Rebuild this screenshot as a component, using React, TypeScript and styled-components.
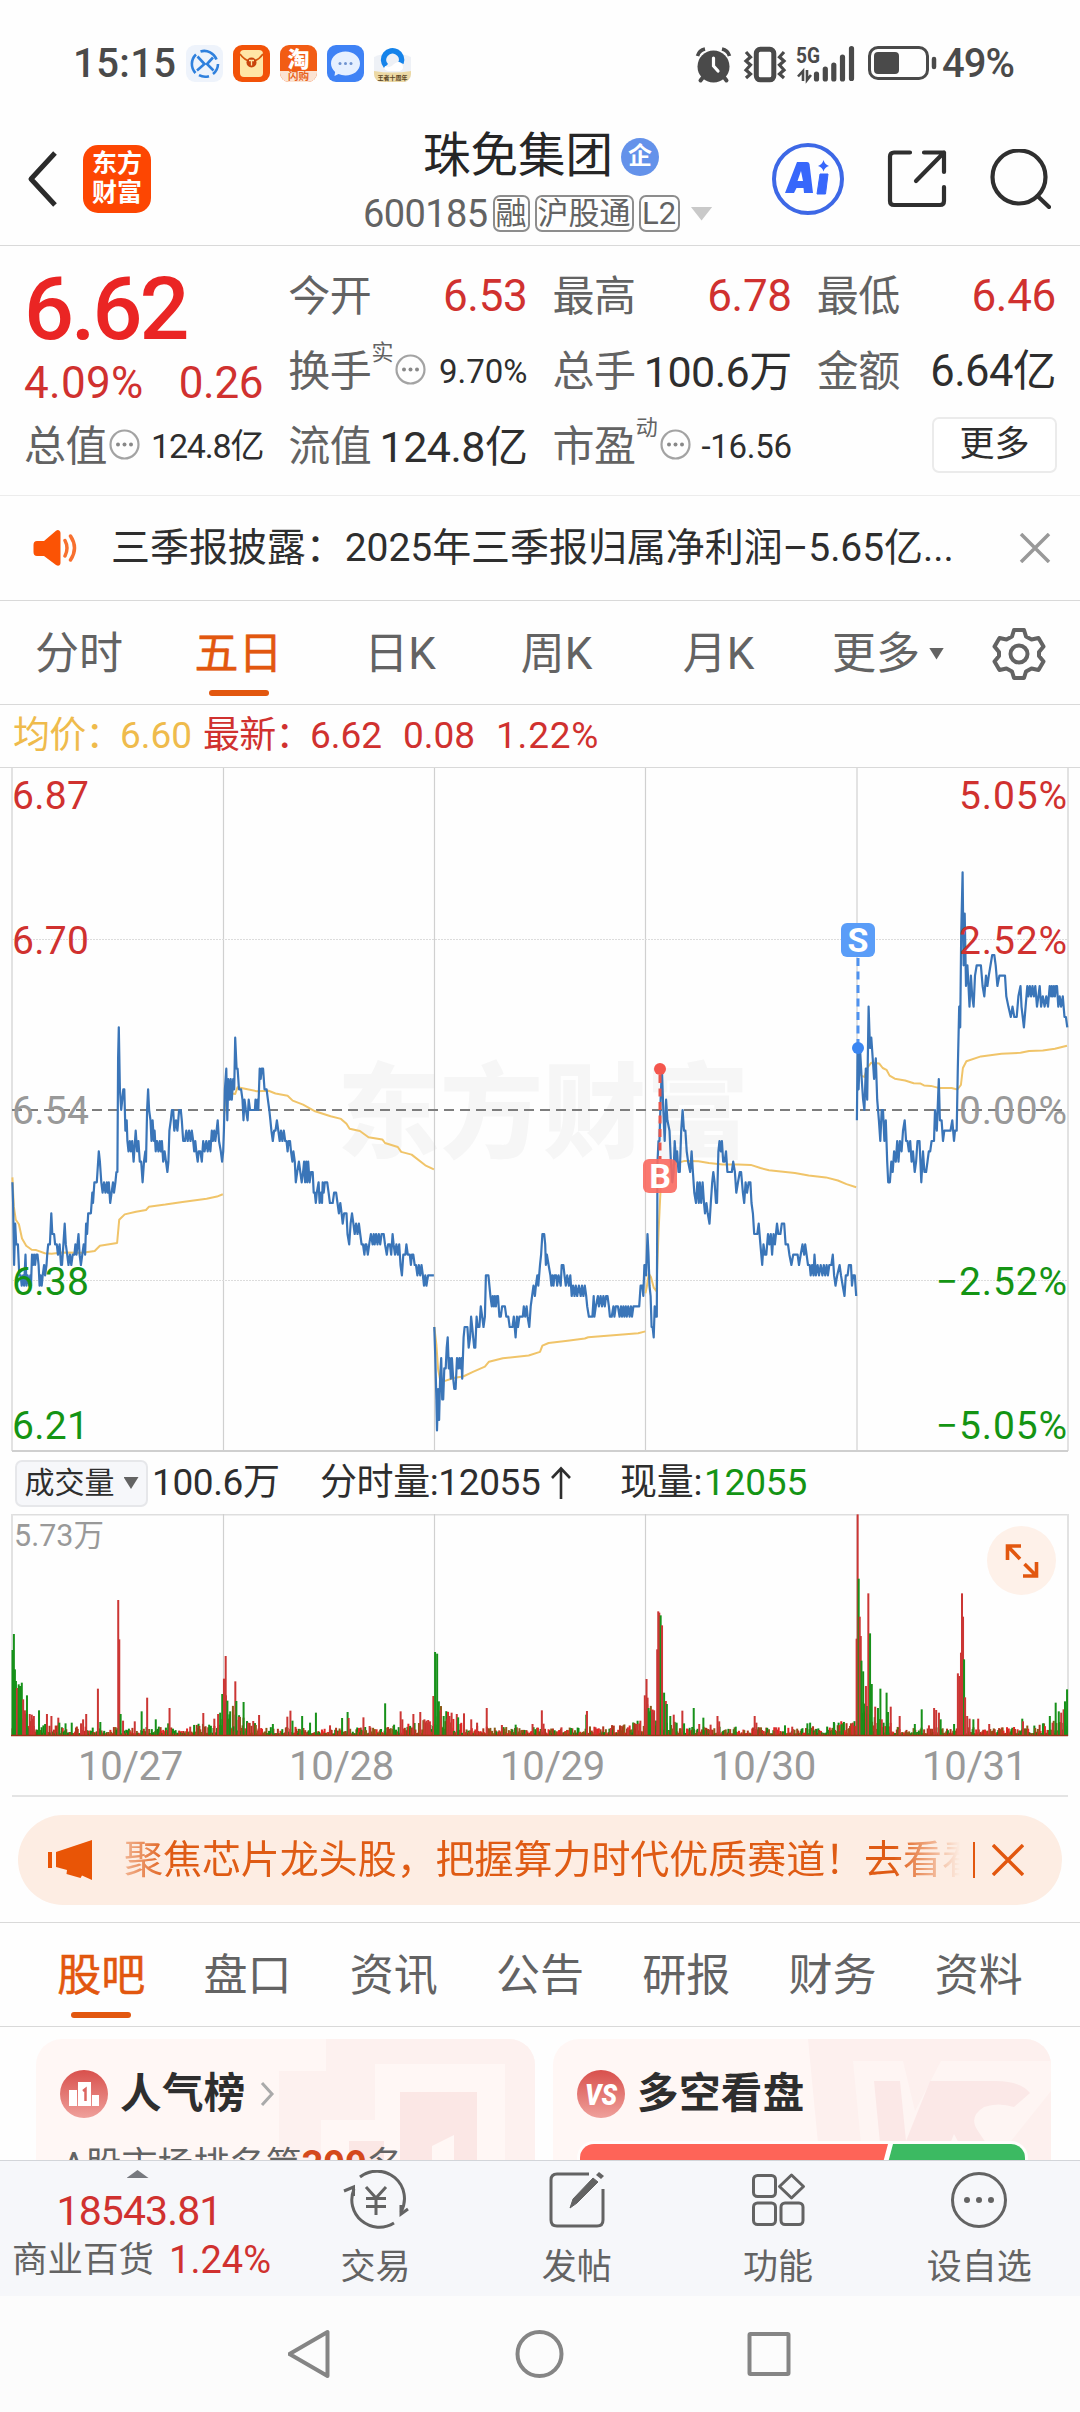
import React from 'react';
import styled, { createGlobalStyle } from 'styled-components';

const RED = '#d0312f';
const GREEN = '#149414';
const ORANGE = '#e2570f';
const INK = '#2e2e2e';
const GRAY = '#636363';
const LINE = '#d9d9d9';

const Global = createGlobalStyle`
  body { margin: 0; background: #fefefe; }
  * { box-sizing: border-box; }
  #root { font-family: Roboto, "Noto Sans CJK SC", sans-serif; color: ${INK}; }
  svg { display: block; flex: none; }
`;

const Page = styled.div`
  width: 1080px;
  height: 2412px;
  overflow: hidden;
  display: flex;
  flex-direction: column;
  background: #fefefe;
  white-space: nowrap;
`;

const Txt = styled.span<{ s: number; c?: string; w?: number; ls?: number }>`
  font-size: ${p => p.s}px;
  line-height: ${p => Math.round(p.s * 1.2)}px;
  color: ${p => p.c ?? 'inherit'};
  font-weight: ${p => p.w ?? 400};
  letter-spacing: ${p => p.ls ?? 0}px;
`;

/* ---------- status bar ---------- */
const StatusBar = styled.div`
  height: 113px;
  padding: 14px 66px 0 73px;
  display: flex;
  align-items: center;
  color: #4a4a4a;
`;
const AppIcons = styled.div`
  display: flex;
  gap: 10px;
  margin-left: 10px;
  flex: 1;
`;
const StatusRight = styled.div`
  display: flex;
  align-items: center;
`;
const Spacer = styled.div<{ w: number }>`
  width: ${p => p.w}px;
  flex: none;
`;

const StatusIcons = () => (
  <AppIcons>
    <svg width="37" height="37" viewBox="0 0 37 37">
      <rect width="37" height="37" rx="9" fill="#eef3fb" />
      <g fill="none" stroke="#2f80dd" strokeWidth="2.6">
        <path d="M14.500 6.500a13 13 0 0 1 16 8M32 19a13 13 0 0 1-5 10M23 31.200a13 13 0 0 1-10-1M9.500 28a13 13 0 0 1 .5-18.500" />
        <path d="M11.500 11.500l7 7.500-7.500 6.500M27 12.500l-6 6.500 6.500 6.500" />
      </g>
    </svg>
    <svg width="37" height="37" viewBox="0 0 37 37">
      <rect width="37" height="37" rx="9" fill="#f25208" />
      <rect x="7" y="5" width="23" height="27" rx="4" fill="#ffe6a6" />
      <path d="M7 9q4 6 11.500 8Q26 15 30 9" fill="none" stroke="#d5570d" strokeWidth="1.600" />
      <circle cx="18.500" cy="17.500" r="5" fill="#c8440c" />
      <path d="M16 15.500h5M18.500 15.500v5" stroke="#ffe6a6" strokeWidth="1.300" />
    </svg>
    <svg width="37" height="37" viewBox="0 0 37 37">
      <rect width="37" height="37" rx="9" fill="#f25c14" />
      <path d="M0 26h37v2a9 9 0 0 1-9 9H9a9 9 0 0 1-9-9z" fill="#fbe3d3" />
      <text x="18.500" y="21.500" fontSize="22" fontWeight="900" fill="#fff" textAnchor="middle">淘</text>
      <text x="18.500" y="35" fontSize="10.500" fontWeight="700" fill="#e8631c" textAnchor="middle">闪购</text>
    </svg>
    <svg width="37" height="37" viewBox="0 0 37 37">
      <rect width="37" height="37" rx="9" fill="#3f82f5" />
      <path d="M18.500 6.500c8 0 14.500 5 14.500 12s-6.500 12-14.500 12c-2.500 0-5-.5-7-1.400L7.500 31l.6-4C5.500 24.500 4 21.800 4 18.500c0-7 6.500-12 14.500-12z" fill="#e6f0ff" />
      <g fill="#6f93d0"><circle cx="13" cy="18.500" r="1.500" /><circle cx="18.500" cy="18.500" r="1.500" /><circle cx="24" cy="18.500" r="1.500" /></g>
    </svg>
    <svg width="37" height="37" viewBox="0 0 37 37">
      <path d="M0 12q18-8 37 0v17a8 8 0 0 1-8 8H8a8 8 0 0 1-8-8z" fill="#eef1f6" />
      <path d="M12 21a9 9 0 1 1 15-3" fill="none" stroke="#1583ea" strokeWidth="5.500" />
      <path d="M11 21q5 3 9-2 5-4 8 0 3 5-2 7H14q-5-1-3-5z" fill="#fff" />
      <path d="M0 26q18 3 37 0v3a8 8 0 0 1-8 8H8a8 8 0 0 1-8-8z" fill="#ecd9a5" />
      <text x="18.500" y="34.500" fontSize="6" fontWeight="700" fill="#5a4526" textAnchor="middle">王者十周年</text>
    </svg>
  </AppIcons>
);

const StatusGlyphs = () => (
  <svg width="245" height="40" viewBox="692 43 245 40" fill="none" stroke="#4a4a4a">
    <circle cx="712.500" cy="65.500" r="16" fill="#4a4a4a" stroke="none" />
    <path d="M696.500 55a10 10 0 0 1 7.500-7M728.500 55a10 10 0 0 0-7.500-7" strokeWidth="3.600" />
    <path d="M703 75l-3.500 4.500M722 75l3.500 4.500" strokeWidth="4" strokeLinecap="round" />
    <path d="M712.500 57v8l4.500 5" stroke="#fff" strokeWidth="3.200" strokeLinecap="round" />
    <rect x="755.300" y="48.300" width="17.500" height="30.500" rx="4" strokeWidth="5" />
    <path d="M745 51l4.500 5-4.500 4 4.500 4-4.500 5 4.500 4-4.500 4M783 51l-4.500 5 4.500 4-4.500 4 4.500 5-4.500 4 4.500 4" strokeWidth="3.200" />
    <text x="795" y="62" fontSize="22" fontWeight="700" fill="#4a4a4a" stroke="none" textLength="24" lengthAdjust="spacingAndGlyphs">5G</text>
    <path d="M802 80V70l-5 5.500M806 69v10l4-5" strokeWidth="2.600" />
    <path d="M815.500 73v5M824.300 68v10M832.800 64v14M841.500 56v22M850.500 47.500v30" strokeWidth="5.200" strokeLinecap="round" />
    <rect x="868.500" y="46.500" width="58" height="31" rx="8.500" strokeWidth="3" />
    <rect x="873" y="51" width="25" height="22" rx="4" fill="#4a4a4a" stroke="none" />
    <path d="M933 58v8" strokeWidth="4.500" strokeLinecap="round" />
  </svg>
);

/* ---------- header ---------- */
const Header = styled.header`
  height: 133px;
  border-bottom: 1px solid ${LINE};
  padding: 0 29px 0 27px;
  display: grid;
  grid-template-columns: 291px 1fr 280px;
  align-items: center;
`;
const HeaderSide = styled.div<{ right?: boolean }>`
  display: flex;
  align-items: center;
  gap: ${p => (p.right ? 43 : 25)}px;
  justify-content: ${p => (p.right ? 'flex-end' : 'flex-start')};
`;
const Logo = styled.div`
  width: 68px;
  height: 68px;
  border-radius: 15px;
  background: #fd4602;
  color: #fff;
  font-size: 25px;
  line-height: 29px;
  font-weight: 700;
  text-align: center;
  padding-top: 4px;
  white-space: normal;
`;
const TitleCol = styled.div`
  display: flex;
  flex-direction: column;
  padding-top: 8px;
`;
const TitleRow = styled.div`
  display: flex;
  align-items: center;
  height: 61px;
  padding-left: 105px;
  gap: 8px;
`;
const Corp = styled.span`
  width: 38px;
  height: 38px;
  border-radius: 50%;
  background: #6492ea;
  color: #fff;
  font-size: 24px;
  line-height: 36px;
  font-weight: 700;
  text-align: center;
`;
const CodeRow = styled.div`
  display: flex;
  align-items: center;
  height: 53px;
  padding-left: 45px;
  gap: 5px;
`;
const Tag = styled.span<{ w?: number }>`
  border: 2px solid #8d8d8d;
  border-radius: 7px;
  height: 37px;
  width: ${p => (p.w ? `${p.w}px` : 'auto')};
  text-align: center;
  padding: 0 1px;
  font-size: 31px;
  line-height: 33px;
  color: ${GRAY};
`;
const Down = styled.i<{ w: number; h: number; c: string; up?: boolean }>`
  width: ${p => p.w}px;
  height: ${p => p.h}px;
  background: ${p => p.c};
  clip-path: ${p => (p.up ? 'polygon(50% 0, 100% 100%, 0 100%)' : 'polygon(0 0, 100% 0, 50% 100%)')};
`;

/* ---------- quote panel ---------- */
const Quote = styled.section`
  height: 250px;
  border-bottom: 1px solid #ececec;
  padding: 13px 24px 0;
  display: grid;
  grid-template-columns: repeat(4, 1fr);
  column-gap: 25px;
  align-content: start;
`;
const QuoteCol = styled.div`
  display: flex;
  flex-direction: column;
`;
const Cell = styled.div<{ h?: number }>`
  height: ${p => p.h ?? 75}px;
  display: flex;
  align-items: center;
  justify-content: space-between;
`;
const LabelBox = styled.span`
  display: flex;
  align-items: center;
  color: ${GRAY};
`;
const Sup = styled.sup`
  font-size: 22px;
  line-height: 24px;
  align-self: flex-start;
  margin-top: -6px;
`;
const HintBox = styled.span`
  margin: 0 0 4px 2px;
`;
const MoreButton = styled.button`
  width: 125px;
  height: 56px;
  margin-left: auto;
  margin-right: -1px;
  margin-bottom: 3px;
  padding: 0;
  border: 2px solid #ebebeb;
  border-radius: 7px;
  background: #fff;
  font: 35px/50px Roboto, "Noto Sans CJK SC", sans-serif;
  color: ${INK};
`;
const Hint = () => (
  <HintBox>
    <svg width="31" height="31" viewBox="0 0 31 31" fill="none" stroke="#a3a3a3" strokeWidth="2.200">
      <circle cx="15.500" cy="15.500" r="14" />
      <g fill="#888" stroke="none"><circle cx="9" cy="15.500" r="2" /><circle cx="15.500" cy="15.500" r="2" /><circle cx="22" cy="15.500" r="2" /></g>
    </svg>
  </HintBox>
);

type StatProps = { label: string; value: string; sup?: string; hint?: boolean; c?: string; s?: number; ls?: number };
const Stat = ({ label, value, sup, hint, c, s = 44, ls = 0 }: StatProps) => (
  <Cell>
    <LabelBox>
      <Txt s={42} ls={-0.4}>{label}</Txt>
      {sup && <Sup>{sup}</Sup>}
      {hint && <Hint />}
    </LabelBox>
    <Txt s={s} c={c} ls={ls}>{value}</Txt>
  </Cell>
);

/* ---------- news ---------- */
const News = styled.section`
  height: 105px;
  border-bottom: 1px solid ${LINE};
  padding: 0 29px 0 32px;
  display: flex;
  align-items: center;
`;
const NewsText = styled.div`
  flex: 1;
  padding-left: 32px;
  font-size: 39px;
  line-height: 48px;
  letter-spacing: -0.05px;
`;

/* ---------- tabs ---------- */
const PeriodTabs = styled.nav`
  height: 104px;
  border-bottom: 1px solid ${LINE};
  display: grid;
  grid-template-columns: 158px 161px 162px 151px 173px 166px 95px;
`;
const SectionTabs = styled.nav`
  height: 104px;
  border-bottom: 1px solid ${LINE};
  padding: 0 28px;
  display: grid;
  grid-template-columns: repeat(7, 1fr);
`;
const Tab = styled.div<{ on?: boolean }>`
  display: flex;
  align-items: center;
  justify-content: center;
  gap: 9px;
  position: relative;
  padding-top: 2px;
  font-size: 44px;
  line-height: 52px;
  font-weight: 400;
  -webkit-text-stroke: ${p => (p.on ? 0.5 : 0)}px currentColor;
  color: ${p => (p.on ? ORANGE : GRAY)};
  &::after {
    content: '';
    display: ${p => (p.on ? 'block' : 'none')};
    position: absolute;
    bottom: 8px;
    left: calc(50% - 30px);
    width: 60px;
    height: 6px;
    border-radius: 3px;
    background: ${ORANGE};
  }
`;

const InfoLine = styled.div`
  height: 63px;
  border-bottom: 1px solid ${LINE};
  padding-left: 13px;
  display: flex;
  align-items: center;
  font-size: 37px;
  line-height: 44px;
  color: ${RED};
`;
const Piece = styled.span<{ w: number; c?: string; ls?: number }>`
  width: ${p => p.w}px;
  color: ${p => p.c ?? 'inherit'};
  letter-spacing: ${p => p.ls ?? 0}px;
`;

/* ---------- price chart ---------- */
const X_UNIT = 0.3444;
const TICK = 10.335;
const BASE_Y = 1110;
const HALF = 1568;

/* [time, ticks below the 6.54 base line] for each run of trading days */
const priceDays: { shift: number; data: string }[] = [
  { shift: 0, data: '36,7 38,9 41,15 44,11 47,13 52,13 56,16 60,16 63,17 67,16 70,17 74,14 77,17 80,16 85,17 88,16 90,17 93,14 96,15 99,14 102,15 105,14 109,14 112,15 115,17 118,16 121,17 124,16 128,15 131,16 135,15 137,14 140,13 145,13 149,10 152,12 157,12 160,13 165,13 168,14 173,13 177,15 180,15 184,13 188,11 191,13 195,14 199,15 203,14 207,15 211,14 216,14 219,13 222,14 228,12 231,14 235,15 239,14 243,13 247,14 250,11 253,12 256,10 264,10 268,8 270,9 274,7 281,7 287,4 290,5 294,7 298,8 302,7 306,8 310,7 313,8 316,7 320,9 324,8 328,7 331,8 335,7 338,6 341,6 343,-5 345,-8 348,-2 352,0 355,-1 358,-2 361,-2 364,2 368,1 370,3 373,4 377,3 380,4 384,3 388,5 390,4 394,2 398,4 402,3 406,5 410,5 414,7 418,5 422,4 424,5 427,0 430,-2 433,0 437,1 440,3 443,1 447,3 449,2 452,4 456,3 460,4 464,3 467,4 470,3 474,5 478,4 482,5 486,6 489,5 492,2 496,1 499,0 503,0 506,2 511,1 515,2 520,0 525,0 528,1 532,3 537,3 541,2 545,3 549,2 553,3 557,2 561,3 564,4 567,3 570,4 574,5 577,4 582,4 586,5 590,3 594,4 599,3 603,4 607,3 611,4 615,2 618,3 622,2 625,3 629,2 632,1 636,3 641,4 645,5 648,4 650,2 653,-2 657,-4 660,1 663,-3 667,-1 670,-3 673,-1 677,-3 680,-2 683,-7 687,-4 690,-4 694,-2 700,-2 704,-1 707,1 710,-1 714,0 719,1 722,-1 726,0 740,0 742,-1 745,0 748,-1 750,0 754,-4 757,-3 760,-4 764,-4 768,-2 774,-2 778,-1 782,0 785,1 788,2 792,3 796,2 800,2 804,1 808,2 812,3 816,2 820,3 824,2 828,3 832,3 835,4 838,3 842,3 845,4 849,5 852,4 856,5 859,7 863,6 868,5 872,6 876,7 880,6 883,5 886,7 889,5 892,7 895,5 899,7 903,6 908,6 911,8 914,8 917,9 920,8 925,7 928,9 932,8 935,9 937,7 940,8 943,7 950,7 954,8 958,9 966,9 970,8 976,8 980,9 984,10 988,9 992,10 995,11 999,10 1006,10 1009,12 1014,13 1018,11 1022,10 1026,11 1030,12 1034,11 1038,12 1042,11 1046,12 1050,13 1054,13 1058,14 1061,13 1064,13 1068,14 1072,13 1077,12 1082,13 1085,12 1088,13 1092,12 1096,13 1100,12 1104,13 1108,12 1114,12 1118,13 1123,14 1127,13 1132,13 1136,14 1140,12 1143,13 1147,14 1151,13 1155,14 1159,13 1163,15 1167,16 1171,14 1177,14 1180,13 1184,14 1190,14 1193,15 1196,14 1200,14 1204,15 1208,15 1212,16 1216,15 1220,16 1224,15 1228,16 1231,17 1235,16 1238,17 1243,16 1260,16' },
  { shift: 0, data: '1261,21 1264,24 1267,28 1269,31 1272,27 1275,30 1278,26 1281,24 1284,28 1287,28 1290,25 1294,25 1297,23 1300,22 1303,25 1306,24 1309,26 1312,24 1316,26 1319,27 1323,27 1327,24 1331,25 1334,24 1337,25 1340,24 1342,26 1346,22 1349,21 1357,21 1361,23 1365,22 1368,20 1371,21 1374,22 1377,23 1380,23 1384,20 1387,21 1392,21 1396,19 1400,20 1404,21 1408,20 1411,16 1418,16 1421,17 1424,18 1428,19 1431,18 1434,19 1437,18 1440,19 1443,18 1446,18 1450,20 1454,20 1458,19 1466,19 1470,20 1476,20 1480,21 1488,21 1492,20 1497,22 1501,20 1504,21 1508,20 1518,20 1521,19 1525,20 1529,19 1532,20 1537,21 1541,19 1545,18 1549,17 1553,18 1556,17 1560,16 1563,17 1568,15 1571,14 1575,12 1580,12 1583,13 1585,15 1588,14 1593,15 1598,16 1601,17 1604,16 1607,17 1610,16 1615,16 1618,17 1622,16 1628,17 1631,15 1636,15 1639,16 1643,17 1647,16 1652,17 1656,16 1660,18 1664,17 1668,18 1672,17 1676,18 1681,17 1686,18 1690,17 1694,18 1698,17 1702,18 1705,19 1710,20 1720,20 1724,18 1726,20 1730,19 1736,18 1739,19 1744,18 1748,19 1752,18 1756,19 1760,18 1764,18 1768,19 1771,20 1776,20 1781,19 1784,20 1788,19 1794,19 1799,20 1803,19 1806,20 1810,19 1813,20 1817,19 1820,20 1824,19 1828,20 1832,19 1835,20 1839,19 1856,19 1860,17 1865,17 1868,18 1871,15 1874,15 1876,16 1880,12 1883,14 1886,17 1889,18 1892,21 1895,21 1898,22 1901,19 1904,20 1907,20 1909,5 1912,3 1915,3 1918,-1 1922,-4 1926,0 1930,3 1934,-1 1938,1 1944,2 1948,5 1952,7 1956,6 1959,3 1963,5 1966,4 1970,6 1974,6 1978,2 1982,0 1986,2 1990,2 1994,4 1998,5 2004,6 2008,4 2012,6 2016,8 2021,9 2025,7 2029,9 2032,7 2036,9 2040,7 2044,9 2047,10 2051,9 2055,10 2060,11 2064,9 2068,7 2071,6 2075,7 2079,9 2082,9 2086,4 2089,3 2093,4 2096,3 2100,5 2104,5 2108,4 2112,6 2125,6 2129,5 2134,6 2138,8 2143,7 2148,6 2152,6 2157,8 2161,9 2165,7 2169,8 2174,7 2179,7 2182,9 2186,10 2190,12 2199,12 2203,11 2208,13 2213,15 2217,13 2221,14 2225,14 2230,12 2234,13 2238,12 2242,14 2246,12 2250,13 2256,11 2260,12 2266,12 2270,11 2277,11 2281,13 2288,13 2292,14 2298,15 2303,14 2316,14 2320,15 2325,14 2330,13 2335,14 2338,13 2342,14 2346,15 2351,15 2354,16 2358,15 2362,16 2365,14 2369,16 2374,15 2378,16 2383,15 2388,16 2392,15 2396,16 2400,15 2404,16 2408,15 2414,15 2418,14 2422,16 2426,17 2431,16 2438,15 2442,16 2447,17 2452,18 2456,16 2461,16 2465,15 2471,15 2474,17 2477,16 2482,16 2486,18' },
  { shift: HALF, data: '920,1 922,-6 925,-2 929,-6 934,-3 938,-1 942,0 946,-4 950,-1 954,-10 958,-6 962,-7 966,-5 970,-3 975,-5 979,-1 984,1 988,3 992,0 996,0 1000,3 1004,1 1008,5 1011,7 1016,7 1020,5 1024,6 1028,4 1033,5 1037,3 1041,5 1045,3 1050,4 1054,2 1059,1 1063,3 1067,3 1071,4 1075,3 1079,5 1083,4 1088,6 1092,5 1096,3 1102,3 1107,7 1112,4 1116,6 1121,6 1125,5 1129,4 1133,4 1137,3 1144,3 1147,0 1152,2 1158,-3 1161,1 1166,1 1170,3 1174,2 1192,2 1197,1 1202,3 1205,2 1210,2 1213,-4 1217,-10 1220,-8 1223,-17 1227,-23 1230,-14 1233,-19 1237,-12 1241,-14 1244,-12 1247,-10 1251,-13 1255,-11 1259,-10 1263,-13 1268,-14 1280,-14 1285,-12 1290,-11 1295,-13 1299,-12 1303,-13 1308,-14 1313,-15 1319,-15 1323,-14 1328,-12 1334,-13 1350,-13 1354,-11 1360,-10 1367,-9 1372,-10 1377,-9 1384,-9 1389,-11 1395,-12 1398,-10 1405,-8 1410,-10 1415,-12 1418,-11 1422,-12 1426,-11 1430,-12 1434,-11 1438,-12 1443,-10 1447,-11 1451,-12 1455,-10 1460,-11 1465,-10 1470,-11 1475,-10 1480,-12 1484,-11 1486,-12 1489,-11 1492,-12 1495,-11 1498,-12 1501,-12 1505,-10 1509,-11 1513,-10 1518,-11 1523,-9 1527,-9 1531,-8' },
];

const averageDays: { shift: number; data: string }[] = [
  { shift: 0, data: '36,935 40,1000 46,1030 55,1040 64,1072 76,1088 92,1097 105,1098 130,1105 150,1106 180,1103 240,1104 275,1100 290,1088 340,1082 346,1030 362,1018 395,1012 424,1008 432,1001 480,996 530,990 600,983 630,978 647,973' },
  { shift: 0, data: '650,800 657,745 683,748 690,733 715,737 745,742 780,741 800,747 835,752 850,763 880,772 915,787 960,798 990,804 1006,815 1015,826 1045,831 1070,845 1110,850 1118,858 1155,867 1165,878 1195,884 1235,908 1260,917' },
  { shift: 0, data: '1261,1270 1267,1310 1272,1365 1278,1388 1292,1391 1320,1384 1345,1381 1375,1370 1408,1359 1420,1348 1460,1340 1535,1334 1568,1326 1575,1312 1593,1306 1648,1301 1698,1296 1708,1293 1808,1287 1853,1284 1874,1280' },
  { shift: HALF, data: '306,1195 310,1180 316,1150 322,1158 330,1182 338,1190 344,1060 350,960 356,930 375,912 400,902 420,898 460,899 490,903 530,906 575,906 612,907 640,914 665,919 740,925 780,931 830,935 865,942 890,950 918,957' },
  { shift: HALF, data: '922,740 925,700 935,708 942,710 950,690 962,678 985,680 995,690 1006,694 1015,707 1030,714 1060,718 1085,724 1105,725 1115,729 1135,730 1160,735 1195,735 1212,738 1222,728 1228,690 1238,675 1280,664 1340,658 1395,656 1420,652 1460,651 1495,647 1530,640' },
];

const toPoints = (day: { shift: number; data: string }, y: (v: number) => number) =>
  day.data
    .split(' ')
    .map(pair => {
      const [x, v] = pair.split(',').map(Number);
      return `${((x + day.shift) * X_UNIT).toFixed(1)},${y(v).toFixed(1)}`;
    })
    .join(' ');

const GRID_X = [12, 223.5, 434.5, 645.5, 857, 1068];

const leftScale: [string, number, string][] = [
  ['6.87', 809, RED], ['6.70', 954, RED], ['6.54', 1124, '#999'], ['6.38', 1295, GREEN], ['6.21', 1439, GREEN],
];
const rightScale: [string, number, string][] = [
  ['5.05%', 809, RED], ['2.52%', 954, RED], ['0.00%', 1124, '#999'], ['−2.52%', 1295, GREEN], ['−5.05%', 1439, GREEN],
];

const PriceChart = () => (
  <svg width="1080" height="684" viewBox="0 768 1080 684">
    <text x="337" y="1150" fontSize="103" fontWeight="900" fill="#f6f6f6">东方财富</text>
    {GRID_X.map((x, i) => (
      <path key={x} d={`M${x} 768V1451`} stroke={i % 5 ? '#d0d0d0' : '#e2e2e2'} strokeWidth={i % 5 ? 1.2 : 2} />
    ))}
    <path d="M12 939.500H1068M12 1280.500H1068" stroke="#dcdcdc" strokeDasharray="2 1" />
    <path d="M12 1451H1068" stroke="#cfcfcf" strokeWidth="2" />
    <path d="M12 1110H1068" stroke="#7d7d7d" strokeWidth="1.800" strokeDasharray="10 6" />
    <g fill="none" strokeLinejoin="round">
      {averageDays.map((d, i) => (
        <polyline key={i} points={toPoints(d, v => 760 + v * 0.4464)} stroke="#f0c469" strokeWidth="2" />
      ))}
      {priceDays.map((d, i) => (
        <polyline key={i} points={toPoints(d, v => BASE_Y + v * TICK)} stroke="#3a75b8" strokeWidth="2.200" />
      ))}
    </g>
    <path d="M858 958v86" stroke="#4e92f0" strokeWidth="3" strokeDasharray="8 5.500" />
    <circle cx="858" cy="1048" r="6" fill="#3a86f2" />
    <rect x="841" y="923" width="34" height="34" rx="6" fill="#5a9df8" />
    <text x="858" y="952" fontSize="34" fontWeight="700" fill="#fff" textAnchor="middle">S</text>
    <path d="M660 1075v84" stroke="#e8544a" strokeWidth="3" strokeDasharray="8 5.500" />
    <circle cx="660" cy="1069" r="6" fill="#f4564d" />
    <rect x="643" y="1159" width="34" height="34" rx="6" fill="#f9695f" fillOpacity="0.900" />
    <text x="660" y="1188" fontSize="34" fontWeight="700" fill="#fff" textAnchor="middle">B</text>
    {leftScale.map(([t, y, c]) => (
      <text key={t} x="12" y={y} fontSize="39" fill={c} letterSpacing="0.300">{t}</text>
    ))}
    {rightScale.map(([t, y, c]) => (
      <text key={t} x="1068" y={y} fontSize="39" fill={c} textAnchor="end" letterSpacing="0.900">{t}</text>
    ))}
  </svg>
);

/* ---------- volume ---------- */
const VolumeHead = styled.div`
  height: 62px;
  display: flex;
  align-items: center;
  padding-left: 15px;
  font-size: 37px;
  line-height: 44px;
`;
const VolumePick = styled.button`
  width: 133px;
  height: 47px;
  padding: 0;
  display: flex;
  align-items: center;
  justify-content: center;
  gap: 9px;
  border: 2px solid #e6e7ea;
  border-radius: 7px;
  background: #f6f7fa;
  color: ${INK};
  font: 30px/40px Roboto, "Noto Sans CJK SC", sans-serif;
  margin-right: 4px;
`;
const VolumeBox = styled.div`
  height: 224px;
  position: relative;
`;
const ExpandButton = styled.button`
  position: absolute;
  right: 24px;
  top: 12px;
  width: 69px;
  height: 69px;
  padding: 0;
  border: 0;
  border-radius: 50%;
  background: #fef1e9;
  display: flex;
  align-items: center;
  justify-content: center;
`;

const spikes =
  '36,258g 40,306g 43,200g 46,165g 49,144r 54,155g 58,150g 63,160g 67,110r 72,77r 78,122g 86,66r 92,64r 98,60r 113,77g 136,66r 149,60r 169,55r 172,40g 190,38g 208,40g 235,38r 241,50r 250,66r 284,142r 291,42g 343,408r 346,290r 350,66g 357,46r 391,44r 411,74g 427,115r 452,50g 488,38g 492,84r 552,28r 590,69r 607,34g 622,52r 633,66r 639,70g 645,126g 650,172r 655,240r 660,106g 668,74g 683,164r 686,105g 693,58r 707,102g 720,40r 735,45r 752,63r 792,36g 834,58r 843,76r 849,46g 877,60g 900,40g 917,70g 958,32r 993,54g 1009,72g 1012,54r 1055,56r 1073,30r 1118,98g 1144,34g 1163,74r 1168,50r 1200,66r 1220,72r 1232,50r 1238,46r 1243,48r 1248,44r 1258,120r 1263,252g 1269,247g 1274,104g 1279,78r 1288,60g 1300,62r 1305,60r 1311,70r 1326,66r 1330,56g 1347,68r 1368,50r 1385,40r 1413,84r 1457,33r 1497,34g 1546,36r 1573,77r 1578,37r 1630,26r 1658,24g 1702,64g 1704,75r 1729,26r 1773,24r 1823,26r 1849,36r 1859,46r 1872,122r 1877,171r 1880,115r 1883,84g 1888,76g 1893,77r 1899,77r 1908,260r 1911,374r 1914,370r 1918,362g 1922,332r 1928,130g 1933,105r 1936,96g 1946,60g 1956,64r 1964,40g 1981,76r 1986,38g 2014,84g 2030,36r 2042,55g 2063,34r 2083,60r 2088,44r 2136,28g 2191,60r 2196,40r 2253,26r 2279,32g 2300,28r 2344,38g 2352,40g 2421,42g 2443,35g 2476,40r 2487,292r 2490,665r 2493,472g 2496,358r 2499,300r 2501,226g 2506,194g 2514,150r 2518,90g 2521,428r 2526,308g 2531,156g 2541,88r 2549,84g 2556,142g 2560,50r 2574,130g 2578,72g 2586,88r 2612,60r 2656,36g 2676,80g 2697,32r 2712,84r 2718,78r 2726,70r 2731,50g 2770,36g 2781,188r 2785,180r 2790,250r 2793,428r 2796,358r 2799,230g 2802,116r 2808,60r 2815,52r 2826,50g 2840,52r 2872,36r 2968,52g 2970,44r 3028,38g 3048,60g 3056,40r 3065,100g 3074,74g 3081,70r 3088,80r 3092,104g 3098,140g';

type VolBar = { x: number; h: number; c: string };
const VOL_UNIT = 0.3333;
const VOL_BASE = 1736;

const buildBars = (): VolBar[] => {
  const bars: VolBar[] = [];
  let seed = 20251;
  const rand = () => {
    seed = (seed * 16807) % 2147483647;
    return seed / 2147483647;
  };
  for (let x = 36; x < 3100; x += 2.56) {
    const t = ((x - 36) % 613) / 613;
    const swell = 11 + 62 * Math.exp(-t * 14) + 22 * Math.exp(-(1 - t) * 12);
    const r = rand();
    bars.push({ x, h: 5 + swell * (0.2 + r * r * 1.8), c: ['#e62525', '#128a12', '#8a5a16', '#b0361c'][Math.floor(rand() * 4)] });
  }
  spikes.split(' ').forEach(s => {
    const [x, rest] = s.split(',');
    bars.push({ x: Number(x), h: parseInt(rest, 10), c: rest.endsWith('g') ? '#17911a' : '#cb3634' });
  });
  return bars;
};
const bars = buildBars();

const VolumeChart = () => (
  <svg width="1080" height="224" viewBox="0 1514 1080 224">
    <path d="M12 1514.800H1068" stroke="#dedede" strokeWidth="1.500" />
    {GRID_X.map((x, i) => (
      <path key={x} d={`M${x} 1514V${VOL_BASE}`} stroke={i % 5 ? '#d0d0d0' : '#e2e2e2'} strokeWidth={i % 5 ? 1.2 : 2} />
    ))}
    {bars.map((b, i) => (
      <rect key={i} x={b.x * X_UNIT - 0.9} y={VOL_BASE - b.h * VOL_UNIT} width="2" height={b.h * VOL_UNIT} fill={b.c} />
    ))}
    <path d="M11 1735.500H1068" stroke="#9c3418" strokeWidth="1.500" />
    <text x="14" y="1546" fontSize="30.500" fill="#999">5.73万</text>
  </svg>
);

const Dates = styled.div`
  height: 59px;
  margin: 0 12px;
  padding-left: 26px;
  border-bottom: 2px solid #e4e4e4;
  display: grid;
  grid-template-columns: repeat(5, 211px);
  align-items: center;
  font-size: 40px;
  line-height: 46px;
  letter-spacing: -0.3px;
  color: #999;
  text-align: center;
  overflow: hidden;
  & > span { width: 185px; }
`;

/* ---------- promo banner ---------- */
const BannerArea = styled.div`
  height: 126px;
  border-bottom: 1px solid ${LINE};
  padding: 18px 18px 0;
`;
const Banner = styled.div`
  height: 90px;
  border-radius: 45px;
  background: #fdede3;
  display: flex;
  align-items: center;
  padding: 0 38px 0 29px;
`;
const BannerText = styled.div`
  margin-left: 30px;
  width: 837px;
  overflow: hidden;
  font-size: 39px;
  line-height: 48px;
  letter-spacing: -0.05px;
  color: #df5b14;
  mask-image: linear-gradient(90deg, rgba(0, 0, 0, 0.4), #000 45px, #000 770px, transparent 836px);
`;
const Divider = styled.i`
  width: 1.5px;
  height: 36px;
  background: ${ORANGE};
  margin: 0 17px 0 12px;
`;

/* ---------- cards ---------- */
const Cards = styled.section`
  height: 133px;
  padding: 12px 29px 0 36px;
  display: grid;
  grid-template-columns: 499px 498px;
  gap: 18px;
  overflow: hidden;
`;
const Card = styled.div`
  height: 200px;
  border-radius: 26px;
  background: #fff7f5;
  padding: 30px 24px 0;
  position: relative;
  overflow: hidden;
`;
const CardArt = styled.div`
  position: absolute;
  right: 0;
  top: 0;
`;
const CardHead = styled.div`
  display: flex;
  align-items: center;
  gap: 12px;
  height: 50px;
  position: relative;
`;
const Rank = styled.div`
  position: relative;
  padding: 24px 0 0 2px;
  font-size: 36px;
  line-height: 44px;
  color: ${GRAY};
  b { color: #d4491c; font-size: 38px; }
`;
const Split = styled.div`
  position: relative;
  margin: 25px 0 0 3px;
  width: 445px;
  height: 34px;
  display: flex;
  border-radius: 14px;
  overflow: hidden;
  background: #fff;
  outline: 3px solid #fffdfc;
`;
const SplitPart = styled.i<{ grow: number; c: string; shape: string }>`
  flex: ${p => p.grow};
  background: ${p => p.c};
  clip-path: ${p => p.shape};
`;
const Badge = ({ children }: { children: React.ReactNode }) => (
  <svg width="48" height="48" viewBox="0 0 48 48">
    <defs>
      <linearGradient id="badge" x1="0" y1="0" x2="0" y2="1">
        <stop offset="0" stopColor="#d8504c" />
        <stop offset="1" stopColor="#efa09b" />
      </linearGradient>
    </defs>
    <circle cx="24" cy="24" r="24" fill="url(#badge)" />
    {children}
  </svg>
);

/* ---------- bottom ---------- */
const BottomBar = styled.footer`
  height: 136px;
  background: #f6f7fa;
  border-top: 1px solid #d3d5d9;
  display: grid;
  grid-template-columns: 275px repeat(4, 201.2px);
`;
const IndexBox = styled.div`
  display: flex;
  flex-direction: column;
  align-items: center;
  padding-top: 9px;
`;
const IndexPrice = styled.span`
  margin-top: 9px;
  margin-left: 3px;
  font-size: 41px;
  line-height: 49px;
  letter-spacing: -0.9px;
  color: ${RED};
`;
const IndexRow = styled.div`
  display: flex;
  align-items: center;
  gap: 15px;
  height: 46px;
  margin-top: 1px;
  margin-left: 8px;
`;
const Action = styled.div`
  display: flex;
  flex-direction: column;
  align-items: center;
  padding-top: 9px;
  font-size: 35px;
  line-height: 42px;
  color: ${GRAY};
  svg { margin-bottom: 17px; }
`;
const SysNav = styled.div`
  height: 116px;
  background: #fcfcfc;
  display: flex;
  justify-content: center;
  align-items: center;
`;

export default function App() {
  return (
    <Page>
      <Global />
      <StatusBar>
        <Txt s={40} w={500} ls={0.4}>15:15</Txt>
        <StatusIcons />
        <StatusRight>
          <StatusGlyphs />
          <Spacer w={4} />
          <Txt s={40} w={500} ls={-1}>49%</Txt>
        </StatusRight>
      </StatusBar>

      <Header>
        <HeaderSide>
          <svg width="31" height="56" viewBox="0 0 31 56" fill="none" stroke="#2b2b2b" strokeWidth="5">
            <path d="M28 2L4 28l24 26" strokeLinejoin="round" />
          </svg>
          <Logo>东方 财富</Logo>
        </HeaderSide>
        <TitleCol>
          <TitleRow>
            <Txt s={47.5} c="#262626">珠免集团</Txt>
            <Corp>企</Corp>
          </TitleRow>
          <CodeRow>
            <Txt s={38} c={GRAY} ls={-0.6}>600185</Txt>
            <Tag>融</Tag>
            <Tag>沪股通</Tag>
            <Tag w={41}>L2</Tag>
            <Spacer w={1} />
            <Down w={22} h={14} c="#c9c9c9" />
          </CodeRow>
        </TitleCol>
        <HeaderSide right>
          <svg width="72" height="72" viewBox="0 0 72 72">
            <circle cx="36" cy="36" r="34" fill="none" stroke="#3d68e6" strokeWidth="4" />
            <path fillRule="evenodd" d="M25 19h10q2 0 2.500 2L41 50H32l-.5-5h-7L22 50H13zM29 28l-3.500 10H31z" fill="#3767fb" />
            <path d="M48 31h8l-2.500 20h-8.500z" fill="#3767fb" stroke="#3767fb" strokeLinejoin="round" />
            <path d="M51.500 17q1.200 4.500 5.500 6-4.300 1.200-5.500 5.500-1.200-4.300-5.500-5.500 4.300-1.500 5.500-6z" fill="#3767fb" />
          </svg>
          <svg width="60" height="60" viewBox="0 0 60 60" fill="none" stroke="#2f2f2f" strokeWidth="4.200" strokeLinecap="round" strokeLinejoin="round">
            <path d="M23 3.500H7q-4 0-4 4V52q0 4 4 4h46q4 0 4-4V38M37 3.500h20V23M57 3.500L29 32" />
          </svg>
          <svg width="61" height="60" viewBox="0 0 61 60" fill="none" stroke="#2f2f2f" strokeWidth="4.200" strokeLinecap="round">
            <circle cx="29" cy="28" r="26.500" />
            <path d="M47.500 47l11.500 11" />
          </svg>
        </HeaderSide>
      </Header>

      <Quote>
        <QuoteCol>
          <Cell h={99}><Txt s={88} w={500} c="#ea2524" ls={-3}>6.62</Txt></Cell>
          <Cell h={51}>
            <Txt s={44} c={RED} ls={0.3}>4.09%</Txt>
            <Txt s={44} c={RED} ls={-0.3}>0.26</Txt>
          </Cell>
          <Stat label="总值" hint value="124.8亿" s={34} ls={-1.2} />
        </QuoteCol>
        <QuoteCol>
          <Stat label="今开" value="6.53" c={RED} ls={-0.3} />
          <Stat label="换手" sup="实" hint value="9.70%" s={33} />
          <Stat label="流值" value="124.8亿" ls={-0.5} s={43} />
        </QuoteCol>
        <QuoteCol>
          <Stat label="最高" value="6.78" c={RED} ls={-0.3} />
          <Stat label="总手" value="100.6万" ls={-0.5} s={43} />
          <Stat label="市盈" sup="动" hint value="-16.56" s={33} ls={-0.3} />
        </QuoteCol>
        <QuoteCol>
          <Stat label="最低" value="6.46" c={RED} ls={-0.3} />
          <Stat label="金额" value="6.64亿" ls={-0.5} s={43.5} />
          <Cell><MoreButton>更多</MoreButton></Cell>
        </QuoteCol>
      </Quote>

      <News>
        <svg width="47" height="36" viewBox="0 0 47 36">
          <path d="M5 11h7L24 .8q2-1.500 3.500 0 1 1 1 2.200v30q0 1.500-1 2.300-1.500 1-3.500-.3L12 26H5q-3.500 0-3.500-4v-7q0-4 3.500-4z" fill="#fb5305" />
          <path d="M33 10.500q4 7.500 0 15.500M38.500 6q8 12 0 24" fill="none" stroke="#f7702f" strokeWidth="3.500" strokeLinecap="round" />
        </svg>
        <NewsText>三季报披露：2025年三季报归属净利润–5.65亿...</NewsText>
        <svg width="32" height="30" viewBox="0 0 32 30" stroke="#999" strokeWidth="3.500">
          <path d="M2 1l28 28M30 1L2 29" />
        </svg>
      </News>

      <PeriodTabs>
        <Tab>分时</Tab>
        <Tab on>五日</Tab>
        <Tab>日K</Tab>
        <Tab>周K</Tab>
        <Tab>月K</Tab>
        <Tab>更多<Down w={15} h={12} c={GRAY} /></Tab>
        <Tab>
          <svg width="56" height="54" viewBox="0 0 56 54" fill="none" stroke={GRAY} strokeWidth="4" strokeLinejoin="round">
            <path d="M23 3h10l2 6.500 5.500 3 7-1.500 5 8.500-4.500 5.500v4l4.500 5.500-5 8.500-7-1.500-5.500 3L33 51H23l-2-6.500-5.500-3-7 1.500-5-8.500L8 29v-4l-4.500-5.500 5-8.500 7 1.500 5.500-3z" />
            <circle cx="28" cy="27" r="8.500" />
          </svg>
        </Tab>
      </PeriodTabs>

      <InfoLine>
        <Piece w={107} c="#efbb4c" ls={-0.8}>均价：</Piece>
        <Piece w={83} c="#efbb4c">6.60</Piece>
        <Piece w={107} ls={-0.8}>最新：</Piece>
        <Piece w={93}>6.62</Piece>
        <Piece w={93}>0.08</Piece>
        <Piece w={120} ls={0.8}>1.22%</Piece>
      </InfoLine>

      <PriceChart />

      <VolumeHead>
        <VolumePick>成交量<Down w={15} h={12} c={GRAY} /></VolumePick>
        <Piece w={168} ls={-0.4}>100.6万</Piece>
        <Piece w={229} ls={-0.4}>分时量:12055</Piece>
        <Spacer w={2} />
        <svg width="20" height="34" viewBox="0 0 20 34" fill="none" stroke={INK} strokeWidth="2.600">
          <path d="M10 33V3M1 12l9-9.500 9 9.500" />
        </svg>
        <Spacer w={49} />
        <Piece w={84} ls={-0.3}>现量:</Piece>
        <Piece w={110} c={GREEN} ls={-0.2}>12055</Piece>
      </VolumeHead>
      <VolumeBox>
        <VolumeChart />
        <ExpandButton>
          <svg width="34" height="34" viewBox="0 0 34 34" fill="none" stroke={ORANGE} strokeWidth="3.600">
            <path d="M16 2H2.500v14M3 2.500L15 15M18 32h13.500V18M31 31.500L19.500 20" />
          </svg>
        </ExpandButton>
      </VolumeBox>
      <Dates>
        {['10/27', '10/28', '10/29', '10/30', '10/31'].map(d => (
          <span key={d}>{d}</span>
        ))}
      </Dates>

      <BannerArea>
        <Banner>
          <svg width="47" height="40" viewBox="0 0 47 40" fill="#e95506">
            <path d="M1 12h4v16H1zM9 12L45 0v40l-10-4.500-1.500 2.500-14-4 .5-4L9 27z" />
          </svg>
          <BannerText>聚焦芯片龙头股，把握算力时代优质赛道！去看看</BannerText>
          <Divider />
          <svg width="32" height="32" viewBox="0 0 32 32" stroke={ORANGE} strokeWidth="3.400">
            <path d="M1 1l30 30M31 1L1 31" />
          </svg>
        </Banner>
      </BannerArea>

      <SectionTabs>
        {['股吧', '盘口', '资讯', '公告', '研报', '财务', '资料'].map((t, i) => (
          <Tab key={t} on={i === 0}>{t}</Tab>
        ))}
      </SectionTabs>

      <Cards>
        <Card>
          <CardArt>
            <svg width="260" height="125" viewBox="0 0 260 125">
              <path d="M51 0h209v125h-30V25H100v56H46v44H4V32h47z" fill="#fdf1ef" />
              <path d="M125 53h77v72h-23V96l-22 11v18h-32zM74 102h35v23H74z" fill="#fbe7e5" />
            </svg>
          </CardArt>
          <CardHead>
            <Badge>
              <path d="M9 20h8v16H9zM18 12h13v24H18zM32 25h7v11h-7z" fill="#fff" />
              <path d="M23 21l2.500-2v12" fill="none" stroke="#dc6661" strokeWidth="2.500" />
            </Badge>
            <Txt s={41.5} w={700} ls={0.4}>人气榜</Txt>
            <svg width="18" height="24" viewBox="0 0 18 24" fill="none" stroke="#aaa" strokeWidth="3">
              <path d="M4 1l10 11L4 23" />
            </svg>
          </CardHead>
          <Rank>A股市场排名第<b>399</b>名</Rank>
        </Card>
        <Card>
          <CardArt>
            <svg width="243" height="125" viewBox="0 0 243 125">
              <path d="M0 0h243v125H12z" fill="#fdf0ee" />
              <path d="M45 22h50l12 50 26-50h110v30l-40 50 20 23H55z" fill="#fef5f3" />
              <path d="M66 42h26l6 60 24-60h66q24 0 34 12l-16 14q-16-5-30 0-16 10-6 24l22 33h-30l-16-30-12 30H74z" fill="#fbe8e7" />
            </svg>
          </CardArt>
          <CardHead>
            <Badge>
              <text x="24" y="35" fontSize="29" fontWeight="900" fontStyle="italic" fill="#fff" textAnchor="middle" textLength="32" lengthAdjust="spacingAndGlyphs">VS</text>
            </Badge>
            <Txt s={41.5} w={700} ls={0.4}>多空看盘</Txt>
          </CardHead>
          <Split>
            <SplitPart grow={308} c="#fe6458" shape="polygon(0 0, 100% 0, calc(100% - 9px) 100%, 0 100%)" />
            <SplitPart grow={137} c="#3cba62" shape="polygon(5px 0, 100% 0, 100% 100%, -4px 100%)" />
          </Split>
        </Card>
      </Cards>

      <BottomBar>
        <IndexBox>
          <Down w={22} h={8} c="#77797e" up />
          <IndexPrice>18543.81</IndexPrice>
          <IndexRow>
            <Txt s={35.5} c={GRAY}>商业百货</Txt>
            <Txt s={38} c={RED}>1.24%</Txt>
          </IndexRow>
        </IndexBox>
        <Action>
          <svg width="68" height="60" viewBox="341 2170 68 60" fill="none" stroke={GRAY} strokeWidth="3">
            <path d="M359 2177a27.500 27.500 0 0 1 41 35M393 2223a27.500 27.500 0 0 1-40-34" />
            <path d="M343 2191l9.500-4v9M407 2209l-7 5v-9M365 2187l10 11 10-11M375 2198v17M365 2198.500h20M365 2206.500h20" />
          </svg>
          交易
        </Action>
        <Action>
          <svg width="60" height="60" viewBox="547 2170 60 60" fill="none" stroke={GRAY} strokeWidth="3">
            <path d="M589 2174h-32q-6 0-6 6v40q0 6 6 6h40q6 0 6-6v-31" />
            <path d="M570 2208l3-9 20-21 5 4-21 21z" fill={GRAY} stroke={GRAY} strokeWidth="1" />
            <path d="M596 2175l3-3 5 4-3 3z" fill={GRAY} stroke="none" />
          </svg>
          发帖
        </Action>
        <Action>
          <svg width="60" height="60" viewBox="748 2170 60 60" fill="none" stroke={GRAY} strokeWidth="3">
            <rect x="753.500" y="2175.500" width="22" height="21" rx="4" />
            <rect x="753.500" y="2203" width="22" height="21.500" rx="4" />
            <rect x="781" y="2203" width="22" height="21.500" rx="4" />
            <path d="M791.500 2175l12 11.500-12 11.500-12-11.500z" strokeLinejoin="round" />
          </svg>
          功能
        </Action>
        <Action>
          <svg width="60" height="60" viewBox="949 2170 60 60" fill="none" stroke={GRAY} strokeWidth="3">
            <circle cx="979" cy="2200" r="26.500" />
            <g fill={GRAY} stroke="none"><circle cx="967" cy="2200" r="3" /><circle cx="979" cy="2200" r="3" /><circle cx="991" cy="2200" r="3" /></g>
          </svg>
          设自选
        </Action>
      </BottomBar>

      <SysNav>
        <svg width="504" height="50" viewBox="288.500 2329 504 50" fill="none" stroke="#858585" strokeWidth="4" strokeLinejoin="round">
          <path d="M328 2332v44L290 2354z" />
          <circle cx="540" cy="2354" r="22" />
          <rect x="750" y="2334" width="39" height="40" rx="1" />
        </svg>
      </SysNav>
    </Page>
  );
}
